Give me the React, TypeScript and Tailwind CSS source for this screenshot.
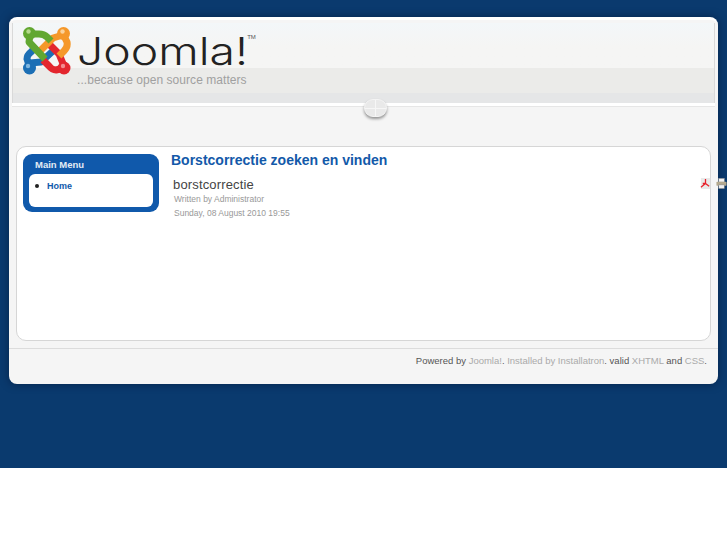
const sans = { fontFamily: '"Liberation Sans", Arial, sans-serif' };

function JoomlaMark() {
  return (
    <svg width="48" height="48" viewBox="0 0 48 48" className="shrink-0">
      {/* blue */}
      <path d="M7 41 L4 32 Q4 28 8 25 L14 19 M7 36 L18 35 L31 23" fill="none" stroke="#1c6fb5" strokeWidth="7" strokeLinejoin="round" />
      <circle cx="6.5" cy="41" r="6.5" fill="#1c6fb5" />
      <circle cx="5" cy="39" r="2.2" fill="#7fb6e0" />
      {/* red */}
      <path d="M41 41 L33 43 Q29 43 26 39 L20 33 M41 39 L36 27 L25 16" fill="none" stroke="#e3262e" strokeWidth="7" strokeLinejoin="round" />
      <circle cx="41" cy="41" r="6.5" fill="#e3262e" />
      <circle cx="40" cy="39" r="2.2" fill="#f28c8f" />
      {/* orange */}
      <path d="M40 7 L44 15 Q45 20 41 24 L36 29 M40 8 L30 11 L16 25" fill="none" stroke="#f5982a" strokeWidth="7" strokeLinejoin="round" />
      <circle cx="40.5" cy="6.5" r="6.5" fill="#f5982a" />
      <circle cx="39.5" cy="4.5" r="2.2" fill="#fbd29a" />
      {/* green */}
      <path d="M8 7 L16 7 Q21 7 24 10 L28 14 M7 8 L6 15 L22 32" fill="none" stroke="#62a730" strokeWidth="7" strokeLinejoin="round" />
      <circle cx="6.5" cy="6.5" r="6.5" fill="#62a730" />
      <circle cx="5.5" cy="4.5" r="2.2" fill="#b5d98c" />
    </svg>
  );
}

function PdfIcon() {
  return (
    <svg width="11" height="11" viewBox="0 0 12 12" className="shrink-0">
      <rect x="1" y="0" width="10" height="12" fill="#e9e9e9" />
      <path d="M6 1 L6 6 L1 10 M6 6 L10 9 M6 6 L3 6" fill="none" stroke="#e8202a" strokeWidth="1.4" />
    </svg>
  );
}

function PrintIcon() {
  return (
    <svg width="11" height="11" viewBox="0 0 12 12" className="shrink-0">
      <rect x="3" y="0.5" width="6" height="4" fill="#f3f3f3" stroke="#999" strokeWidth="0.6" />
      <rect x="0.5" y="4" width="11" height="4.5" rx="1" fill="#b4a98e" />
      <rect x="3" y="7.5" width="6" height="4" fill="#f0f0f0" stroke="#888" strokeWidth="0.6" />
    </svg>
  );
}

function Header() {
  return (
    <div className="relative mx-[3px] mt-[3px] h-[80px] border-x border-[#d9d9d9] bg-gradient-to-b from-[#f3f7f9] to-[#f5f5f4] to-30%">
      <div className="absolute left-0 right-0 top-[45px] h-[25px] bg-[#ebebe9]" />
      <div className="absolute left-0 right-0 top-[70px] h-[10px] bg-[#e5e6e7]" />
      <div className="relative flex items-start pl-[10px] pt-[4px]">
        <JoomlaMark />
        <div className="ml-[6px] w-[190px]">
          <div className="flex items-start h-[45px] pt-[3px]">
            <span className="text-[#222] text-[38px] leading-[42px] font-light origin-left scale-x-[1.22]" style={{ fontFamily: 'Inter, sans-serif' }}>Joomla!</span>
            <span className="text-[#555] text-[6px] leading-[8px] mt-[3px] ml-[30px]" style={sans}>TM</span>
          </div>
          <div className="text-[#a0a0a0] text-[12px] leading-[14px] mt-[1px] whitespace-nowrap tracking-[0.05px]" style={sans}>...because open source matters</div>
        </div>
      </div>
    </div>
  );
}

export default function App() {
  return (
    <div className="relative h-[545px] bg-white overflow-hidden" style={sans}>
      <div className="h-[468px] bg-[#0a3a6e] pl-[9px] pt-[17px]">
        <div className="relative w-[709px] h-[367px] rounded-[8px] bg-[#f5f5f5] shadow-[0_0_8px_rgba(0,20,50,0.6)] border-t-[3px] border-white">
          <Header />

          {/* handle */}
          <div className="absolute left-[355px] top-[79px] w-[23px] h-[18px] rounded-full bg-[#e9e9e9] border border-[#f4f4f4] shadow-[0_2px_3px_rgba(0,0,0,0.4)]">
            <div className="absolute left-[10px] top-0 bottom-0 w-px bg-[#f6f6f6]" />
            <div className="absolute left-0 right-0 top-[8px] h-px bg-[#f6f6f6]" />
          </div>
          <div className="h-[3px] mx-[3px] bg-white" />
          <div className="h-px mx-[3px] bg-[#e6e6e6]" />

          <div className="mx-[7px] mt-[39px] h-[195px] bg-white border border-[#d6d6d6] rounded-[10px] flex pl-[6px] pt-[7px]">
            <div className="w-[136px] h-[58px] rounded-[9px] bg-[#1059ab] px-[6px] shrink-0">
              <div className="text-[#e4ecf5] text-[9.5px] font-bold h-[20px] leading-[22px] pl-[6px]">Main Menu</div>
              <div className="h-[33px] rounded-[6px] bg-white flex items-start pt-[6px]">
                <span className="w-[4px] h-[4px] rounded-full bg-[#222] ml-[6px] mt-[4px]" />
                <span className="text-[#1059ab] text-[9px] font-bold leading-[13px] ml-[8px]">Home</span>
              </div>
            </div>
            <div className="ml-[12px] flex-1 min-w-0">
              <div className="text-[#1359a9] text-[14px] font-bold leading-[16px] -mt-[2px]">Borstcorrectie zoeken en vinden</div>
              <div className="flex justify-between items-start mt-[9px] -mr-[17px]">
                <div className="pl-[2px] text-[13px] leading-[16px] text-[#444] tracking-[0.15px]">borstcorrectie</div>
                <div className="flex gap-[5px] mt-[1px]">
                  <PdfIcon />
                  <PrintIcon />
                </div>
              </div>
              <div className="pl-[3px] text-[8.5px] leading-[14px] text-[#999] -mt-[1px]">Written by Administrator</div>
              <div className="pl-[3px] text-[8.5px] leading-[14px] text-[#999]">Sunday, 08 August 2010 19:55</div>
            </div>
          </div>

          <div className="mt-[7px] border-t border-[#dcdcdc] h-[30px] pr-[11px] pt-[5px] text-right text-[9.5px] leading-[14px] text-[#555] whitespace-nowrap">
            Powered by <span className="text-[#aaa]">Joomla!</span>. <span className="text-[#aaa]">Installed by Installatron</span>. valid <span className="text-[#aaa]">XHTML</span> and <span className="text-[#aaa]">CSS</span>.
          </div>
        </div>
      </div>
    </div>
  );
}
